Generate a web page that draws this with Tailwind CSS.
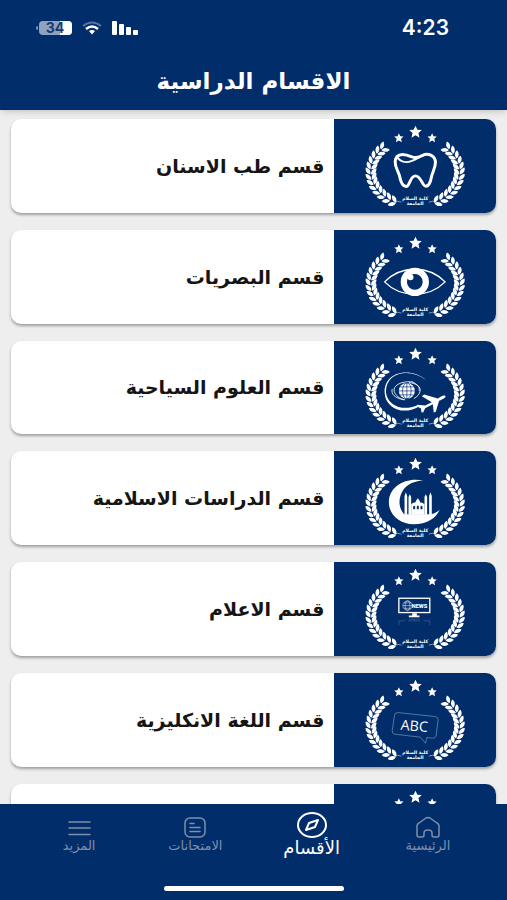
<!DOCTYPE html>
<html lang="ar" dir="rtl">

<head>
    <meta charset="UTF-8">
    <meta name="viewport" content="width=device-width, initial-scale=1.0">
    <title>الاقسام الدراسية</title>
    <script src="https://cdn.jsdelivr.net/npm/@tailwindcss/browser@4"></script>
</head>

<body class="flex flex-col h-screen bg-[#eeeeef] font-['DejaVu_Sans',sans-serif]">
    <!-- shared emblem parts -->
    <svg class="hidden">
        <symbol id="leaf" viewBox="-16 -16 32 32" overflow="visible">
            <path d="M-1 12C-11 11-18 3-16-8C-8-7-1-1-1 7ZM1 12C11 11 18 3 16-8C8-7 1-1 1 7Z" />
        </symbol>
        <symbol id="star" viewBox="-10 -10 20 20" overflow="visible">
            <path d="M0-10L3-3.500L10-3L4.700 1.700L6.300 9L0 5.200L-6.300 9L-4.700 1.700L-10-3L-3-3.500Z" />
        </symbol>
        <symbol id="wreath" viewBox="13 13 486 282">
            <g class="js-leaves" fill="#fff"></g>
            <g fill="#fff">
                <use href="#star" x="239" y="33" width="38" height="38" />
                <use href="#star" x="194" y="56" width="28" height="28" />
                <use href="#star" x="294" y="56" width="28" height="28" />
            </g>
            <path d="M194 264Q204 257 216 263M320 264Q310 257 298 263" fill="none" stroke="#fff" stroke-width="1.500" />
            <g fill="#fff" font-size="14" font-weight="bold" text-anchor="middle">
                <text x="257" y="257">كلية السلام</text>
                <text x="257" y="273">الجامعة</text>
            </g>
        </symbol>
    </svg>

    <header class="relative z-10 bg-[#022d6b] text-white shadow-md">
        <div class="flex items-center justify-between h-14 pl-9 pr-[58px]">
            <time class="text-[21px] font-semibold font-['Inter',sans-serif]">4:23</time>
            <div dir="ltr" class="flex items-center gap-2.5">
                <svg class="w-9 h-4 overflow-visible" viewBox="0 0 36 16" role="img" aria-label="34%">
                    <path d="M2 6Q0 6 0 8Q0 10 2 10Z" fill="#7f96b8" />
                    <rect x="3" y="1" width="33" height="14" rx="4" fill="#8ea3c2" />
                    <path d="M24 1H32Q36 1 36 5V11Q36 15 32 15H24Z" fill="#fff" />
                    <text x="19" y="13" text-anchor="middle" font-family="Inter" font-size="14" font-weight="700" fill="#1a3a6e">34</text>
                </svg>
                <svg class="w-5 h-4" viewBox="0 0 20 16" fill="none" stroke="#fff">
                    <path d="M1 6Q10-1 19 6" stroke="#55739e" stroke-width="2" />
                    <path d="M4 9Q10 4 16 9" stroke-width="2.500" />
                    <path d="M7 11Q10 9 13 11L10 14.500Z" fill="#fff" stroke="none" />
                </svg>
                <svg class="w-[26px] h-4" viewBox="0 0 26 16" fill="#fff">
                    <rect x="0" y="1" width="5" height="14" rx="1" />
                    <rect x="7" y="4" width="5" height="11" rx="1" />
                    <rect x="14" y="7" width="5" height="8" rx="1" />
                    <rect x="21" y="10" width="5" height="5" rx="1" />
                </svg>
            </div>
        </div>
        <h1 class="h-[54px] text-center text-[23px] leading-[50px] font-bold">الاقسام الدراسية</h1>
    </header>

    <main class="flex-1 min-h-0 overflow-y-auto [scrollbar-width:none] px-[11px] py-[9px]">
        <ul class="flex flex-col gap-[17px]">
            <li>
                <a href="#dentistry" class="flex items-stretch rounded-[10px] overflow-hidden bg-white shadow-[0_2px_3px_#00000055]">
                    <svg class="w-1/3 bg-[#022d6b]" viewBox="13 13 486 282">
                        <use href="#wreath" x="13" y="13" width="486" height="282" />
                        <g fill="none" stroke="#fff" stroke-width="9" stroke-linecap="round" stroke-linejoin="round">
                            <path d="M202 126C212 116 231 120 247 127C258 132 266 129 278 123C297 114 318 123 318 144C318 160 310 170 306 187C303 204 298 215 289 215C278 215 275 184 258 184C241 184 241 216 230 216C218 216 213 200 210 184C206 168 197 161 197 143C197 136 199 130 202 126Z" />
                            <path d="M202 126C211 142 229 146 247 139C258 135 263 130 270 128" stroke-width="6" />
                        </g>
                    </svg>
                    <h2 class="flex-1 self-center px-2.5 text-[19px] leading-7 font-bold text-[#151515]">قسم طب الاسنان</h2>
                </a>
            </li>
            <li>
                <a href="#optics" class="flex items-stretch rounded-[10px] overflow-hidden bg-white shadow-[0_2px_3px_#00000055]">
                    <svg class="w-1/3 bg-[#022d6b]" viewBox="13 13 486 282">
                        <use href="#wreath" x="13" y="13" width="486" height="282" />
                        <path d="M165 169Q202 131 256 131Q310 131 347 169Q310 206 256 206Q202 206 165 169Z" fill="none" stroke="#fff" stroke-width="4" />
                        <circle cx="256" cy="169" r="33" fill="none" stroke="#fff" stroke-width="19" />
                        <circle cx="256" cy="169" r="22" fill="#022d6b" />
                        <circle cx="243" cy="155" r="9" fill="#fff" />
                    </svg>
                    <h2 class="flex-1 self-center px-2.5 text-[19px] leading-7 font-bold text-[#151515]">قسم البصريات</h2>
                </a>
            </li>
            <li>
                <a href="#tourism" class="flex items-stretch rounded-[10px] overflow-hidden bg-white shadow-[0_2px_3px_#00000055]">
                    <svg class="w-1/3 bg-[#022d6b]" viewBox="13 13 486 282">
                        <use href="#wreath" x="13" y="13" width="486" height="282" />
                        <path d="M290 130C245 92 166 102 165 166C166 215 220 236 264 213L262 207C220 225 173 207 169 166C169 106 240 92 290 130Z" fill="#fff" />
                        <g fill="none" stroke="#fff" stroke-width="2.500">
                            <path d="M250 136C210 132 190 150 194 164C197 177 211 187 227 190M223 190C196 184 184 174 188 157" />
                            <path d="M238 138C260 140 274 150 272 163C270 174 263 181 253 186M248 136C266 144 271 153 269 163" />
                        </g>
                        <circle cx="232" cy="163" r="24" fill="#fff" />
                        <g fill="none" stroke="#022d6b" stroke-width="2">
                            <path d="M208 163H256M212 151H252M212 175H252M232 139V187" />
                            <ellipse cx="232" cy="163" rx="13" ry="24" />
                        </g>
                        <path d="M348 178C343 174 334 179 325 186L284 174L277 179L307 197L287 207L264 205L260 209L274 215L276 227L281 228L287 215L310 203L313 228L319 226L329 193C341 187 350 183 348 178Z" fill="#fff" />
                    </svg>
                    <h2 class="flex-1 self-center px-2.5 text-[19px] leading-7 font-bold text-[#151515]">قسم العلوم السياحية</h2>
                </a>
            </li>
            <li>
                <a href="#islamic" class="flex items-stretch rounded-[10px] overflow-hidden bg-white shadow-[0_2px_3px_#00000055]">
                    <svg class="w-1/3 bg-[#022d6b]" viewBox="13 13 486 282">
                        <use href="#wreath" x="13" y="13" width="486" height="282" />
                        <g fill="#fff">
                            <path d="M281 102C230 91 178 119 178 167C178 207 213 233 252 233C292 233 319 217 331 189C318 202 308 203 300 203H224C204 181 207 151 222 129C237 110 258 104 281 102Z" />
                            <path d="M225 205V148L229 137L233 148V205ZM237 205V151L241 143L245 151V205ZM285 205V151L289 143L293 151V205ZM299 205V148L303 137L307 148V205Z" />
                            <path d="M245 205V174Q250 166 258 168Q258 163 265 155Q272 163 272 168Q280 166 285 174V205Z" />
                        </g>
                        <path d="M251 188V180Q254 175 257 180V188ZM262 188V180Q265 173 268 180V188ZM273 188V180Q276 175 279 180V188Z" fill="#022d6b" />
                    </svg>
                    <h2 class="flex-1 self-center px-2.5 text-[19px] leading-7 font-bold text-[#151515]">قسم الدراسات الاسلامية</h2>
                </a>
            </li>
            <li>
                <a href="#media" class="flex items-stretch rounded-[10px] overflow-hidden bg-white shadow-[0_2px_3px_#00000055]">
                    <svg class="w-1/3 bg-[#022d6b]" viewBox="13 13 486 282">
                        <use href="#wreath" x="13" y="13" width="486" height="282" />
                        <rect x="208" y="122" width="93" height="43" fill="none" stroke="#fff" stroke-width="4" />
                        <path d="M248 167H262V174H270V179H238V174H248Z" fill="#fff" />
                        <g fill="none" stroke="#fff" stroke-width="1.500">
                            <circle cx="234" cy="144" r="14" />
                            <ellipse cx="234" cy="144" rx="7" ry="14" />
                            <path d="M220 144H248M223 136H245M223 152H245" />
                            <path d="M208 203V190H227M236 190H272M282 190H301V203" stroke="#5874a0" />
                            <path d="M239 185H271" stroke="#5874a0" />
                        </g>
                        <text x="270" y="150" text-anchor="middle" direction="ltr" font-family="Roboto" font-size="17" font-weight="900" fill="#fff">NEWS</text>
                    </svg>
                    <h2 class="flex-1 self-center px-2.5 text-[19px] leading-7 font-bold text-[#151515]">قسم الاعلام</h2>
                </a>
            </li>
            <li>
                <a href="#english" class="flex items-stretch rounded-[10px] overflow-hidden bg-white shadow-[0_2px_3px_#00000055]">
                    <svg class="w-1/3 bg-[#022d6b]" viewBox="13 13 486 282">
                        <use href="#wreath" x="13" y="13" width="486" height="282" />
                        <path d="M206 132L318 144Q327 146 326 154L320 202Q318 210 309 209L292 207L288 224L273 206L196 197Q187 195 188 186L195 140Q197 131 206 132Z" fill="none" stroke="#7e95b8" stroke-width="2" />
                        <text x="254" y="187" text-anchor="middle" direction="ltr" transform="rotate(5 254 174)" font-family="Open Sans" font-size="43" font-weight="500" fill="#fff">ABC</text>
                    </svg>
                    <h2 class="flex-1 self-center px-2.5 text-[19px] leading-7 font-bold text-[#151515]">قسم اللغة الانكليزية</h2>
                </a>
            </li>
            <li>
                <a href="#more-departments" class="flex items-stretch rounded-[10px] overflow-hidden bg-white shadow-[0_2px_3px_#00000055]">
                    <svg class="w-1/3 bg-[#022d6b]" viewBox="13 13 486 282">
                        <use href="#wreath" x="13" y="13" width="486" height="282" />
                    </svg>
                </a>
            </li>
        </ul>
    </main>

    <nav class="relative z-10 h-24 bg-[#022d6b] text-[#7f8fa9]">
        <div class="flex px-[21px] pt-2">
            <a href="#home" class="flex-1 flex flex-col items-center pt-1">
                <svg class="w-6 h-6" viewBox="0 0 24 24" fill="none" stroke="currentColor" stroke-width="1.500" stroke-linejoin="round">
                    <path d="M1 10Q1 8 3 7L10 2Q12 1 14 2L21 7Q23 8 23 10V19Q23 21 21 21H18Q16 21 16 19V17Q16 14 12 14Q8 14 8 17V19Q8 21 6 21H3Q1 21 1 19Z" />
                </svg>
                <span class="text-[13px] leading-3">الرئيسية</span>
            </a>
            <a href="#departments" aria-current="page" class="flex-1 flex flex-col items-center text-white">
                <svg class="w-[30px] h-[26px]" viewBox="0 0 30 26" fill="none" stroke="currentColor" stroke-width="2" stroke-linejoin="round">
                    <ellipse cx="15" cy="13" rx="14" ry="12" />
                    <path d="M21 8L18 15L9 18L12 11Z" />
                </svg>
                <span class="text-lg leading-5">الأقسام</span>
            </a>
            <a href="#exams" class="flex-1 flex flex-col items-center pt-1">
                <svg class="w-6 h-6" viewBox="0 0 24 24" fill="none" stroke="currentColor" stroke-width="1.500" stroke-linecap="round">
                    <rect x="2" y="2" width="20" height="19" rx="5" />
                    <path d="M7 7.500H11M7 11.500H17M7 15.500H17" />
                </svg>
                <span class="text-[13px] leading-3">الامتحانات</span>
            </a>
            <a href="#more" class="flex-1 flex flex-col items-center pt-1">
                <svg class="w-6 h-6" viewBox="0 0 24 24" fill="none" stroke="currentColor" stroke-width="1.500" stroke-linecap="round">
                    <path d="M2 6H23M2 12H23M2 18.500H23" />
                </svg>
                <span class="text-[13px] leading-3">المزيد</span>
            </a>
        </div>
        <div class="mx-auto mt-7 w-[180px] h-[5px] rounded-full bg-white"></div>
    </nav>

    <script type="text/javascript">
        const SVG_NS = "http://www.w3.org/2000/svg";
        const leaves = document.querySelector(".js-leaves");
        const PAIRS = 13;

        // Walk both sides of the wreath from the bottom up.
        for (const side of [1, -1]) {
            for (let i = 0; i < PAIRS; i++) {
                const a = (-59 + i * 105 / (PAIRS - 1)) * Math.PI / 180;
                const x = 257 - side * 133 * Math.cos(a);
                const y = 172 - 103 * Math.sin(a);
                const turn = side * Math.atan2(133 * Math.sin(a), 103 * Math.cos(a)) * 180 / Math.PI;
                const leaf = document.createElementNS(SVG_NS, "use");
                leaf.setAttribute("href", "#leaf");
                leaf.setAttribute("x", -16);
                leaf.setAttribute("y", -16);
                leaf.setAttribute("width", 32);
                leaf.setAttribute("height", 32);
                leaf.setAttribute("transform", `translate(${x} ${y}) rotate(${turn})`);
                leaves.appendChild(leaf);
            }
        }
    </script>
</body>

</html>
